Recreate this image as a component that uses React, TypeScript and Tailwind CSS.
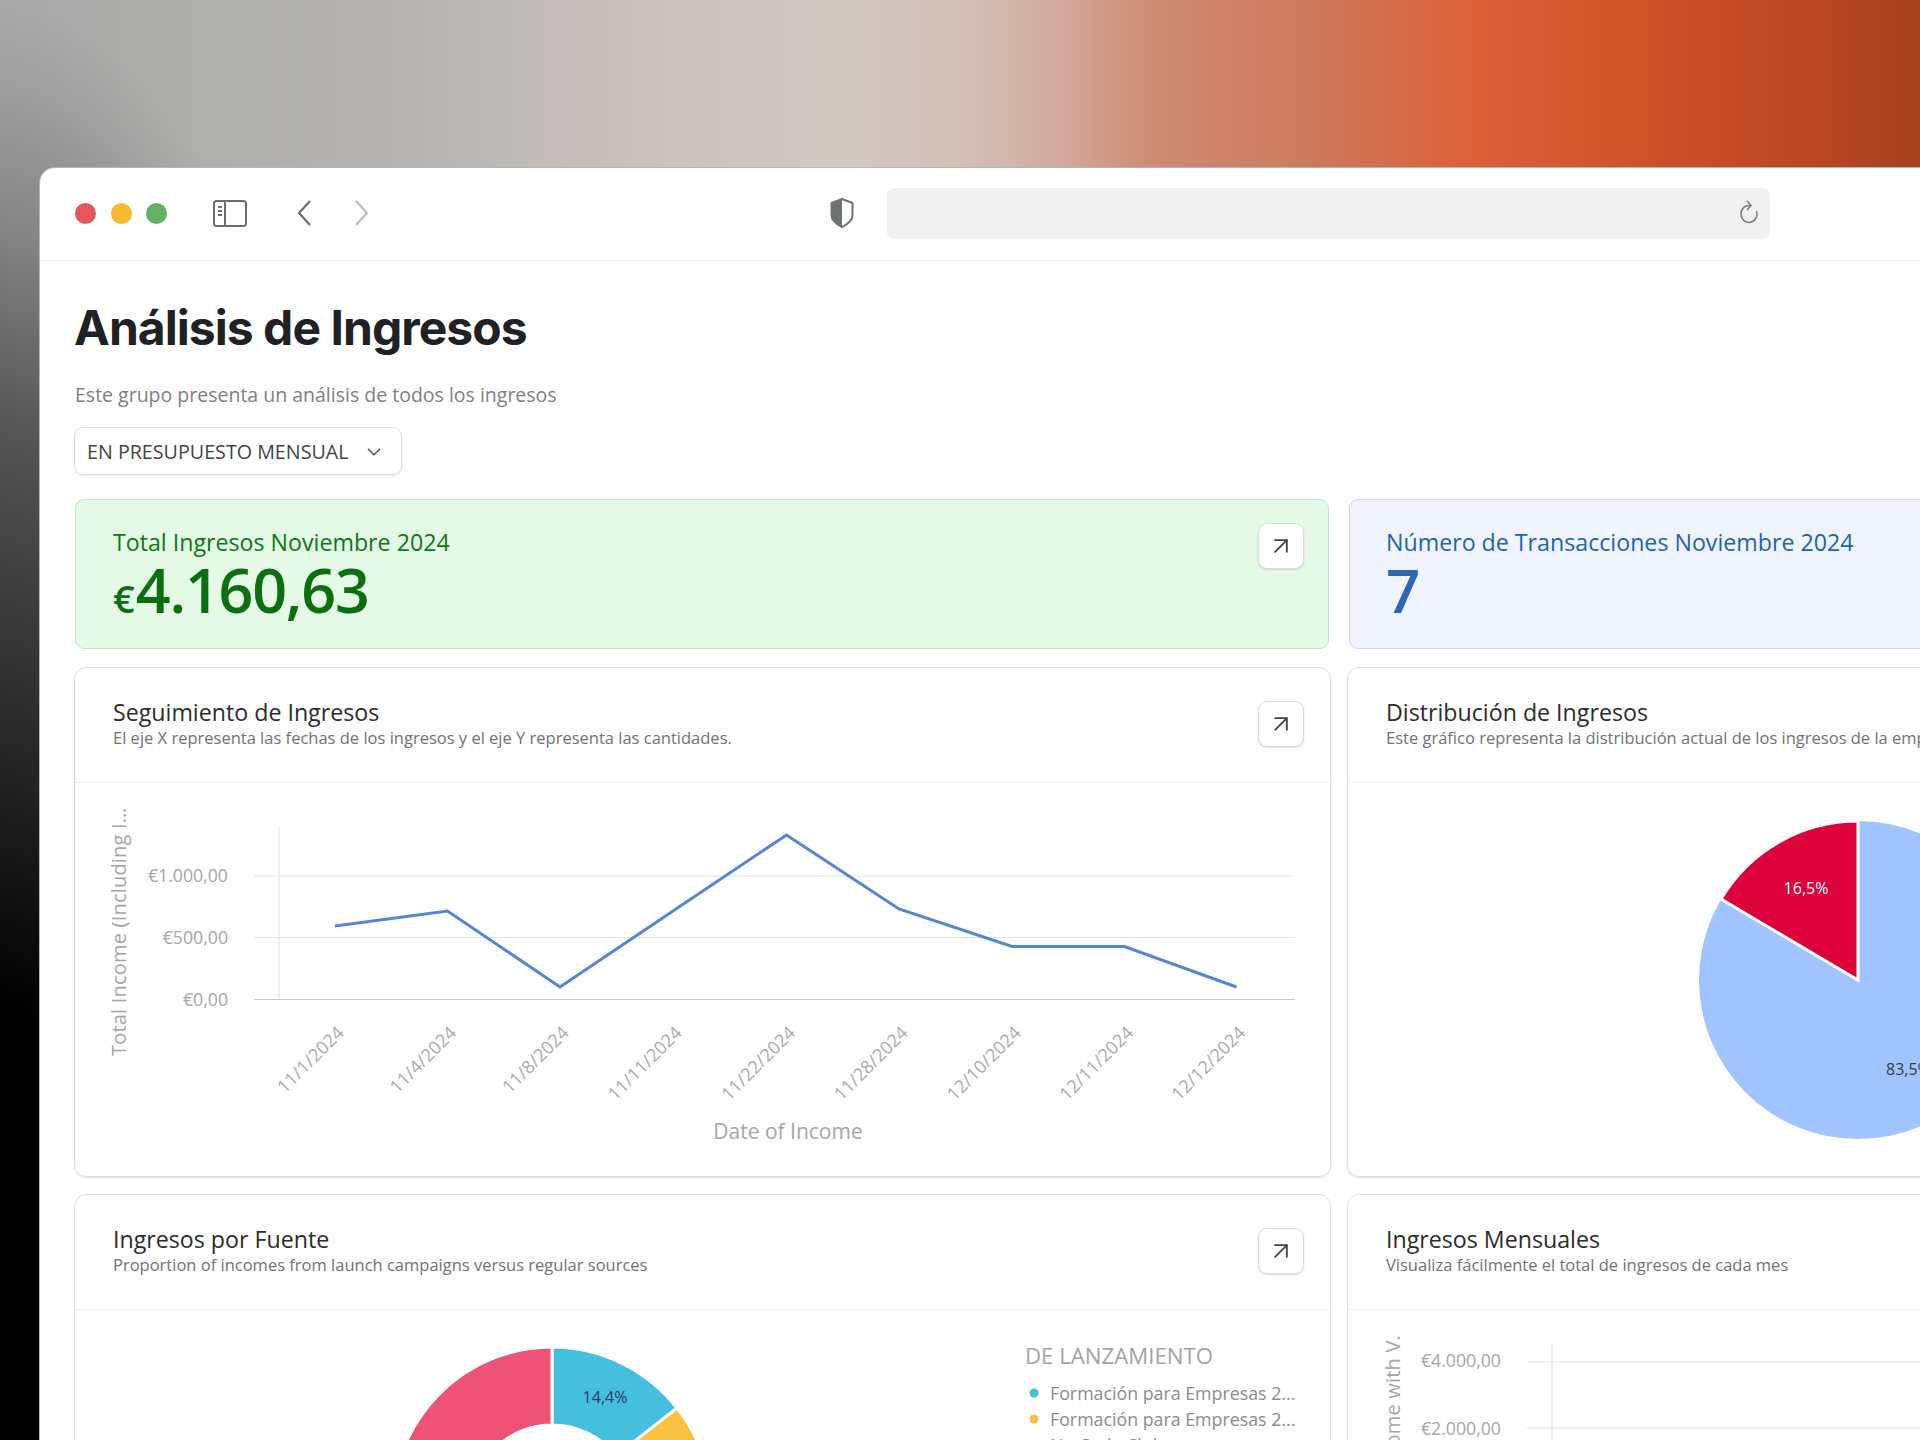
import { ArrowUpRight, ChevronDown } from 'lucide-react';

const linePoints = [
  { date: '11/1/2024', x: 335, y: 926 },
  { date: '11/4/2024', x: 447.5, y: 911 },
  { date: '11/8/2024', x: 560, y: 987 },
  { date: '11/11/2024', x: 673, y: 911 },
  { date: '11/22/2024', x: 786.5, y: 835 },
  { date: '11/28/2024', x: 899, y: 909 },
  { date: '12/10/2024', x: 1012, y: 946.5 },
  { date: '12/11/2024', x: 1124.5, y: 946.5 },
  { date: '12/12/2024', x: 1236.5, y: 987 },
];

const ExpandButton = () => (
  <button className="flex h-[46px] w-[46px] shrink-0 items-center justify-center rounded-[9px] border border-[#dcdcdc] bg-white shadow-[0_1px_2px_rgba(0,0,0,0.14)]">
    <ArrowUpRight size={28} strokeWidth={1.6} className="text-[#444444]" />
  </button>
);

const CardHeader = ({ title, subtitle, button = true }: { title: string; subtitle: string; button?: boolean }) => (
  <div className="flex h-[115px] items-start justify-between border-b border-[#f0f0f0] pl-[38px] pr-[26px]">
    <div className="pt-[28px]">
      <h3 className="text-[23.2px] font-medium leading-[32px] text-[#2c2c2c]">{title}</h3>
      <p className="mt-px whitespace-nowrap text-[16.5px] leading-[18px] text-[#727272]">{subtitle}</p>
    </div>
    {button && (
      <div className="pt-[33px]">
        <ExpandButton />
      </div>
    )}
  </div>
);

const IncomeLine = () => (
  <svg viewBox="75 783 1255 394" className="block h-[394px] w-[1255px]">
    <line x1="279" y1="827" x2="279" y2="999" stroke="#e2e2e2" />
    <line x1="254" y1="876" x2="1295" y2="876" stroke="#e4e4e4" />
    <line x1="254" y1="937.5" x2="1295" y2="937.5" stroke="#e4e4e4" />
    <line x1="254" y1="999.5" x2="1295" y2="999.5" stroke="#c9c9c9" />
    <g fontSize="17.7" fill="#a6a6a6" textAnchor="end">
      <text x="228" y="882">€1.000,00</text>
      <text x="228" y="944">€500,00</text>
      <text x="228" y="1006">€0,00</text>
    </g>
    <text transform="rotate(-90 126 1056)" x="126" y="1056" fontSize="20" letterSpacing="0.2" fill="#a6a6a6">
      Total Income (Including I…
    </text>
    <polyline
      points={linePoints.map((p) => `${p.x},${p.y}`).join(' ')}
      fill="none"
      stroke="#5288d2"
      strokeWidth="3"
    />
    {linePoints.map((p) => (
      <text
        key={p.date}
        x={p.x + 10}
        y={1034}
        transform={`rotate(-45 ${p.x + 10} 1034)`}
        textAnchor="end"
        fontSize="18"
        fill="#aaaaaa"
      >
        {p.date}
      </text>
    ))}
    <text x="788" y="1139" textAnchor="middle" fontSize="21" fill="#a6a6a6">
      Date of Income
    </text>
  </svg>
);

const DistributionPie = () => (
  <svg viewBox="1348 783 600 394" className="block h-[394px] w-[600px]">
    <circle cx="1858" cy="980" r="159" fill="#a0c4ff" />
    <path d="M1858 980 L1858 821 A159 159 0 0 0 1721 899 Z" fill="#dc003b" stroke="#ffffff" strokeWidth="3" />
    <text x="1806" y="894" textAnchor="middle" fontSize="16" fontWeight="500" fill="#ffffff">
      16,5%
    </text>
    <text x="1886" y="1075" fontSize="16" fill="#3c3c3c">
      83,5%
    </text>
  </svg>
);

const SourceDonut = () => (
  <svg viewBox="75 1310 1255 130" className="block h-[130px] w-[1255px]">
    <path d="M552 1506 m0 -159 A159 159 0 0 1 677 1408 L616 1456 A81 81 0 0 0 552 1425 Z" fill="#45bfdd" stroke="#ffffff" strokeWidth="3" />
    <path d="M677 1408 A159 159 0 0 1 710 1530 L632 1518 A81 81 0 0 0 616 1456 Z" fill="#f9c13d" stroke="#ffffff" strokeWidth="3" />
    <path d="M552 1347 A159 159 0 0 0 393 1506 L471 1506 A81 81 0 0 1 552 1425 Z" fill="#ee5277" stroke="#ffffff" strokeWidth="3" />
    <text x="605" y="1403" textAnchor="middle" fontSize="16" fill="#2b3b6b">
      14,4%
    </text>
    <text x="1025" y="1364" fontSize="22.2" fontWeight="500" fill="#a3a3a3">
      DE LANZAMIENTO
    </text>
    <g fontSize="17.8" fill="#8c8c8c">
      <circle cx="1034" cy="1393" r="4.5" fill="#45bfdd" />
      <text x="1050" y="1400">Formación para Empresas 2...</text>
      <circle cx="1034" cy="1419" r="4.5" fill="#f9c13d" />
      <text x="1050" y="1426">Formación para Empresas 2...</text>
      <circle cx="1034" cy="1445" r="4.5" fill="#9a9a9a" />
      <text x="1050" y="1452">No Code Club</text>
    </g>
  </svg>
);

const MonthlyChart = () => (
  <svg viewBox="1348 1310 600 130" className="block h-[130px] w-[600px]">
    <line x1="1552" y1="1343" x2="1552" y2="1440" stroke="#e2e2e2" />
    <line x1="1527" y1="1362" x2="1948" y2="1362" stroke="#e4e4e4" />
    <line x1="1527" y1="1428" x2="1948" y2="1428" stroke="#e4e4e4" />
    <g fontSize="17.7" fill="#a6a6a6" textAnchor="end">
      <text x="1501" y="1367">€4.000,00</text>
      <text x="1501" y="1435">€2.000,00</text>
    </g>
    <text transform="rotate(-90 1400 1335)" x="1400" y="1335" textAnchor="end" fontSize="20" letterSpacing="0.2" fill="#a6a6a6">
      Total Income with V.
    </text>
  </svg>
);

export default function App() {
  return (
    <div className="h-[1440px] w-[1920px] overflow-hidden bg-[radial-gradient(ellipse_440px_1440px_at_0_1440px,#000000_30%,rgba(0,0,0,0.5)_70%,rgba(0,0,0,0.2)_85%,rgba(0,0,0,0.05)_95%,transparent_100%),linear-gradient(to_right,#a9a9a9_0%,#b4b3b0_20%,#cbc3bf_35%,#d3c7c1_44%,#d3c0b8_50%,#d2ab9c_55%,#cf8b74_60%,#cc7a5e_68%,#dc623a_76%,#cf5029_86%,#a8411e_100%)] pl-[39px] pt-[167px] font-['Open_Sans',sans-serif]">
      <div className="h-[1273px] w-[1900px] overflow-hidden rounded-tl-[16px] border-l border-t border-[#b5b5b5] bg-white">
        {/* toolbar */}
        <div className="flex h-[93px] items-center border-b border-[#eeeeee] pb-[2px]">
          <div className="ml-[35px] flex gap-[14.5px]">
            <span className="h-[21px] w-[21px] rounded-full bg-[#e5565b]" />
            <span className="h-[21px] w-[21px] rounded-full bg-[#f7b92f]" />
            <span className="h-[21px] w-[21px] rounded-full bg-[#63b163]" />
          </div>
          <svg viewBox="0 0 34 27" className="ml-[46px] h-[27px] w-[34px]" fill="none" stroke="#6e6e6e" strokeWidth="2">
            <rect x="1" y="1" width="32" height="25" rx="2.5" />
            <line x1="12" y1="1" x2="12" y2="26" />
            <line x1="5" y1="7" x2="9" y2="7" />
            <line x1="5" y1="11" x2="9" y2="11" />
            <line x1="5" y1="15" x2="9" y2="15" />
          </svg>
          <svg viewBox="0 0 14 26" className="ml-[50px] h-[26px] w-[14px]" fill="none" stroke="#6e6e6e" strokeWidth="2.2">
            <polyline points="13,1 2,13 13,25" />
          </svg>
          <svg viewBox="0 0 14 26" className="ml-[44px] h-[26px] w-[14px]" fill="none" stroke="#bdbdbd" strokeWidth="2.2">
            <polyline points="1,1 12,13 1,25" />
          </svg>
          <svg viewBox="0 0 24 30" className="ml-[461px] h-[30px] w-[24px]">
            <path d="M12 1 L22.5 5 V17 C22.5 22 17 26.5 12 29 C7 26.5 1.5 22 1.5 17 V5 Z" fill="#ffffff" stroke="#6f7275" strokeWidth="2" />
            <path d="M12 1 V29 C7 26.5 1.5 22 1.5 17 V5 Z" fill="#6f7275" />
          </svg>
          <div className="ml-[33px] flex h-[51px] w-[883px] items-center justify-end rounded-[7px] bg-[#f1f1f1] pr-[11px]">
            <svg viewBox="0 0 20 26" className="h-[26px] w-[20px]" fill="none" stroke="#7b7b7b" strokeWidth="1.5">
              <path d="M11 5.5 A8 8.5 0 1 0 17.5 11" />
              <polyline points="8,1 12,5.5 8,10" />
            </svg>
          </div>
        </div>

        {/* page */}
        <div className="pl-[34px] pt-[39px]">
          <h1 className="font-['Inter',sans-serif] text-[48px] font-bold leading-[56px] tracking-[-0.02em] text-[#1f2125]">
            Análisis de Ingresos
          </h1>
          <p className="mt-[25px] pl-px text-[19.5px] leading-[28px] text-[#7f7f7f]">
            Este grupo presenta un análisis de todos los ingresos
          </p>
          <button className="mt-[18px] flex h-[48px] w-[328px] items-center justify-between rounded-[9px] border border-[#dedede] pl-[12px] pr-[16px] pt-px text-[19.7px] text-[#444444] shadow-[0_1px_2px_rgba(0,0,0,0.1)]">
            EN PRESUPUESTO MENSUAL
            <ChevronDown size={22} strokeWidth={1.8} className="text-[#555555]" />
          </button>

          {/* stat cards */}
          <div className="ml-px mt-[24px] grid grid-cols-[1254px_1254px] gap-[20px]">
            <div className="flex h-[150px] justify-between rounded-[9px] border border-[#c2e6c6] bg-[#e5f9e7] pl-[37px] pr-[24px] pt-[26px]">
              <div>
                <div className="text-[23.2px] font-medium leading-[32px] text-[#0b7a12]">Total Ingresos Noviembre 2024</div>
                <div className="mt-[2px] flex items-baseline text-[#0b6e0f]">
                  <span className="text-[38px] font-semibold leading-[60px]">€</span>
                  <span className="pl-px text-[61px] font-semibold leading-[60px] tracking-[-0.02em]">4.160,63</span>
                </div>
              </div>
              <div className="mt-[-3px]">
                <ExpandButton />
              </div>
            </div>
            <div className="h-[150px] rounded-[9px] border border-[#ccd6e6] bg-[#eff4fe] pl-[36px] pt-[26px]">
              <div className="text-[23.2px] font-medium leading-[32px] text-[#1f63b4]">Número de Transacciones Noviembre 2024</div>
              <div className="mt-[2px] text-[60px] font-semibold leading-[60px] text-[#2a67b8]">7</div>
            </div>
          </div>

          {/* charts */}
          <div className="mt-[18px] grid grid-cols-[1257px_1257px] gap-x-[16px] gap-y-[17px]">
            <div className="h-[510px] rounded-[12px] border border-[#dddddd] shadow-[0_1px_2px_rgba(0,0,0,0.12)]">
              <CardHeader title="Seguimiento de Ingresos" subtitle="El eje X representa las fechas de los ingresos y el eje Y representa las cantidades." />
              <IncomeLine />
            </div>
            <div className="h-[510px] rounded-[12px] border border-[#dddddd] shadow-[0_1px_2px_rgba(0,0,0,0.12)]">
              <CardHeader
                title="Distribución de Ingresos"
                subtitle="Este gráfico representa la distribución actual de los ingresos de la empresa"
                button={false}
              />
              <DistributionPie />
            </div>
            <div className="h-[300px] rounded-[12px] border border-[#dddddd]">
              <CardHeader title="Ingresos por Fuente" subtitle="Proportion of incomes from launch campaigns versus regular sources" />
              <SourceDonut />
            </div>
            <div className="h-[300px] rounded-[12px] border border-[#dddddd]">
              <CardHeader title="Ingresos Mensuales" subtitle="Visualiza fácilmente el total de ingresos de cada mes" button={false} />
              <MonthlyChart />
            </div>
          </div>
        </div>
      </div>
    </div>
  );
}
